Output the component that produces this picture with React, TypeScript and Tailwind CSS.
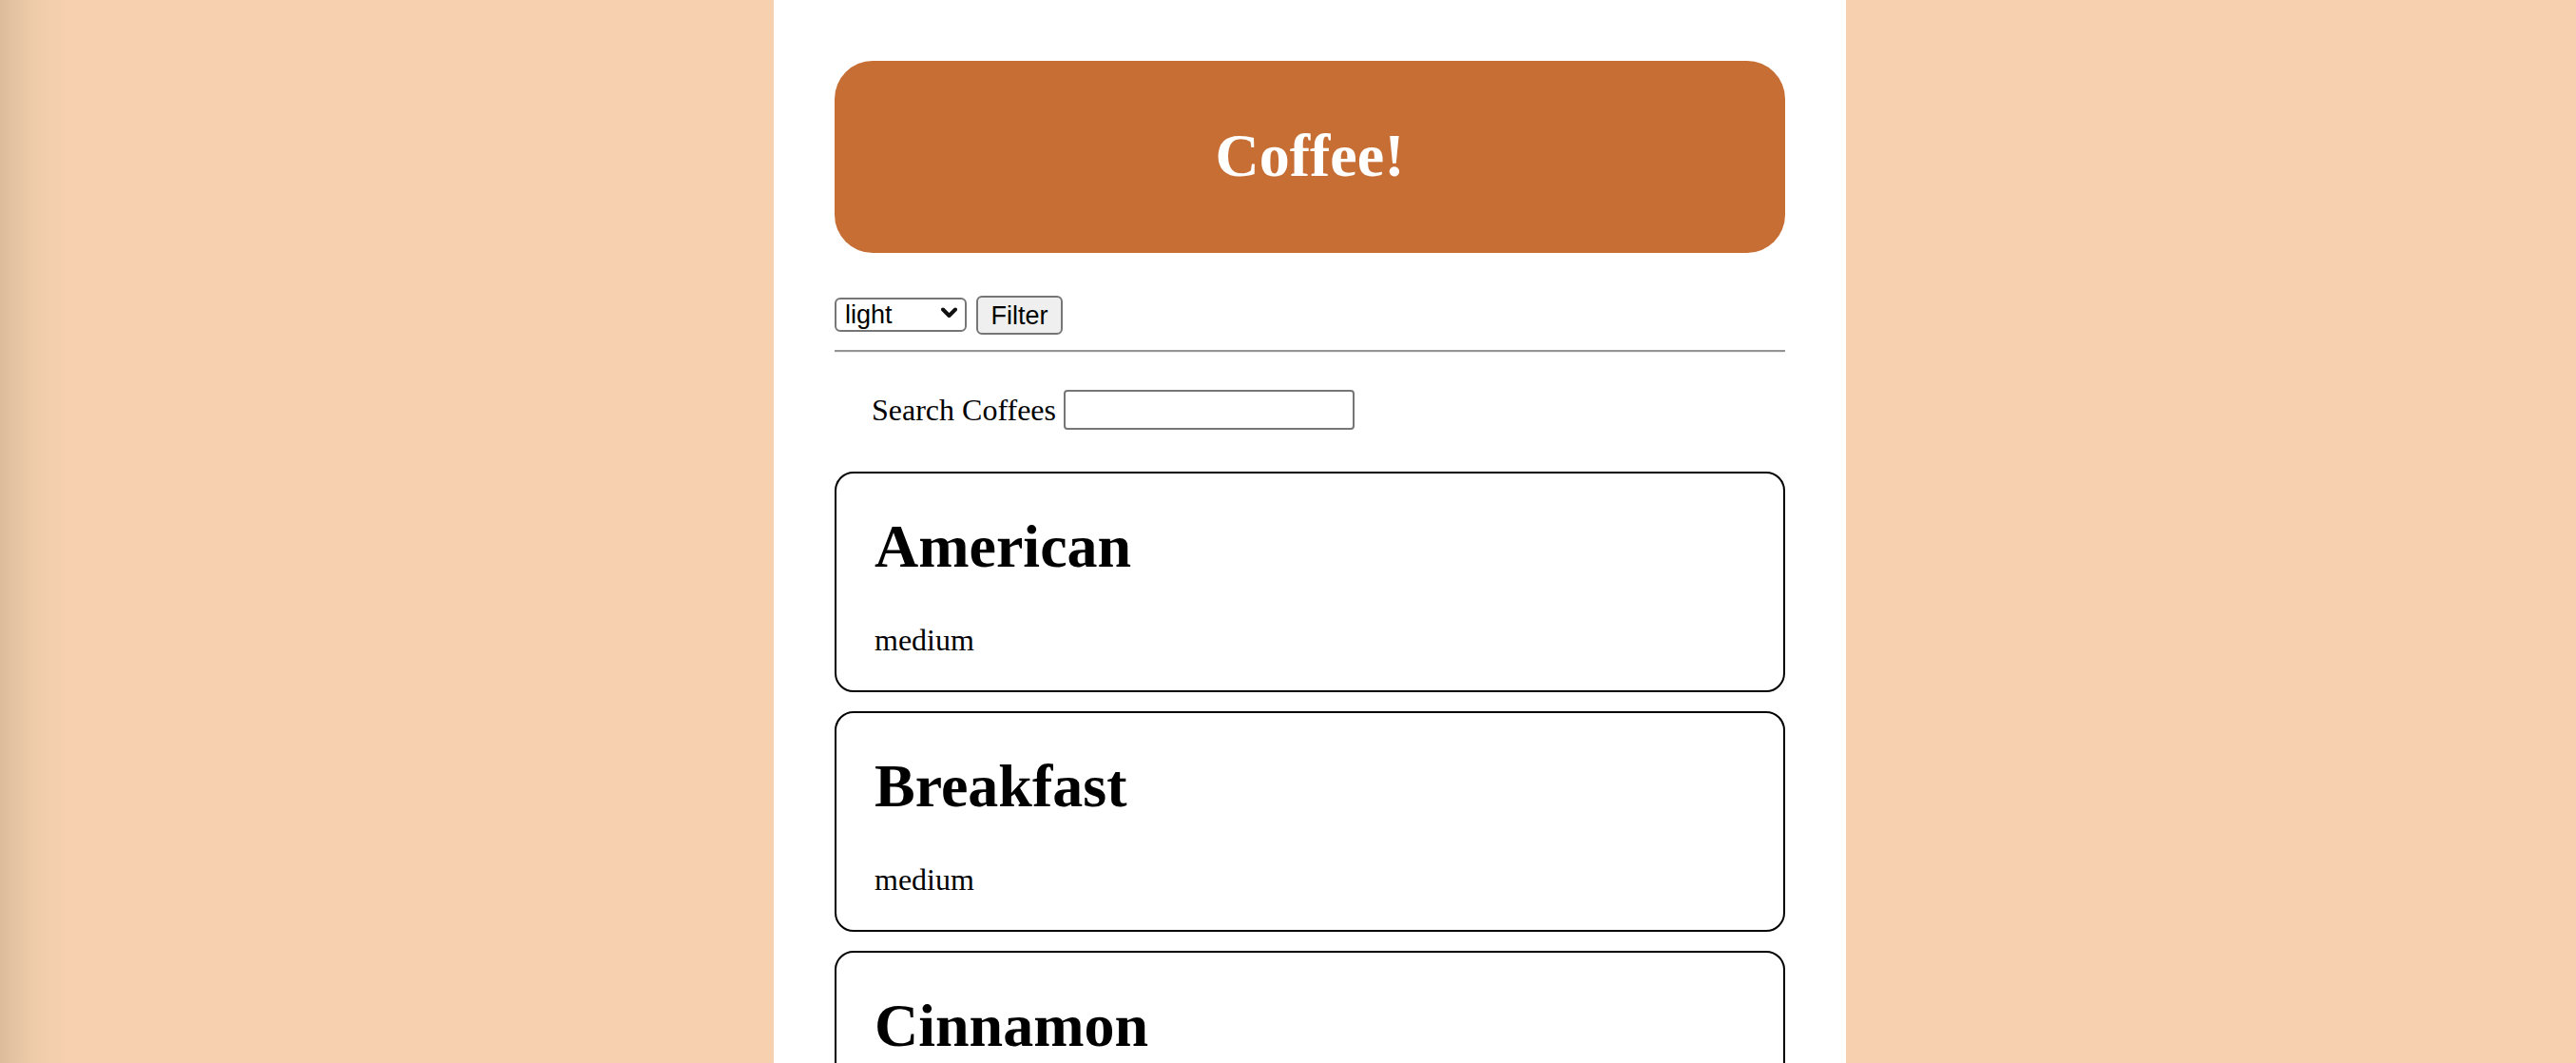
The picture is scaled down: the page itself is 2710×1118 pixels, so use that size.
import { useState } from "react";

const coffees = [
  { name: "American", roast: "medium" },
  { name: "Breakfast", roast: "medium" },
  { name: "Cinnamon", roast: "light" },
];

function Chevron() {
  return (
    <svg
      className="pointer-events-none absolute right-[10px] top-[12px] h-[12px] w-[17px]"
      viewBox="0 0 17 12"
      fill="none"
    >
      <path d="M2 2.5 L8.5 9 L15 2.5" stroke="#111" strokeWidth="4" strokeLinecap="round" strokeLinejoin="round" />
    </svg>
  );
}

export default function App() {
  const [roast, setRoast] = useState("light");
  const [query, setQuery] = useState("");

  return (
    <div className="min-h-screen bg-[#f7d1af] bg-[linear-gradient(to_right,#dcbc9c_0px,#eccaa8_30px,#f4cfad_55px,#f7d1af_75px)] font-['Liberation_Serif','Times_New_Roman',serif] text-black">
      <main className="ml-[814px] min-h-screen w-[1128px] bg-white px-[64px] pt-[64px] pb-[40px]">
        <header className="flex h-[202px] items-center justify-center rounded-[40px] bg-[#c76e34] pb-[3px]">
          <h1 className="text-[64px] font-bold leading-[64px] text-white">Coffee!</h1>
        </header>

        <form className="mt-[45px] flex items-center gap-[10px] font-['Liberation_Sans',Arial,sans-serif] text-[27px]" onSubmit={(e) => e.preventDefault()}>
          <div className="relative">
            <select
              value={roast}
              onChange={(e) => setRoast(e.target.value)}
              className="h-[36px] w-[139px] appearance-none rounded-[6px] border-2 border-[#767676] bg-white pl-[9px] leading-[30px] text-black"
            >
              <option value="light">light</option>
              <option value="medium">medium</option>
              <option value="dark">dark</option>
            </select>
            <Chevron />
          </div>
          <button
            type="submit"
            className="h-[41px] w-[91px] rounded-[6px] border-2 border-[#767676] bg-[#efefef] leading-[36px] text-black"
          >
            Filter
          </button>
        </form>

        <div className="mt-[16px] border-t-2 border-b border-t-[#949494] border-b-[#ececec]" />

        <div className="mt-[36px] flex items-center gap-[8px] pl-[39px]">
          <label htmlFor="search" className="text-[32px]">Search Coffees</label>
          <input
            id="search"
            value={query}
            onChange={(e) => setQuery(e.target.value)}
            className="h-[42px] w-[306px] rounded-[4px] border-2 border-[#767676] bg-white px-[4px] text-[26px]"
          />
        </div>

        <ul className="mt-[41px] flex flex-col gap-[20px]">
          {coffees.map((c) => (
            <li key={c.name} className="h-[232px] rounded-[20px] border-2 border-black px-[40px] pt-[41px]">
              <h2 className="text-[64px] font-bold leading-[72px]">{c.name}</h2>
              <p className="mt-[44px] text-[32px] leading-[36px]">{c.roast}</p>
            </li>
          ))}
        </ul>
      </main>
    </div>
  );
}
